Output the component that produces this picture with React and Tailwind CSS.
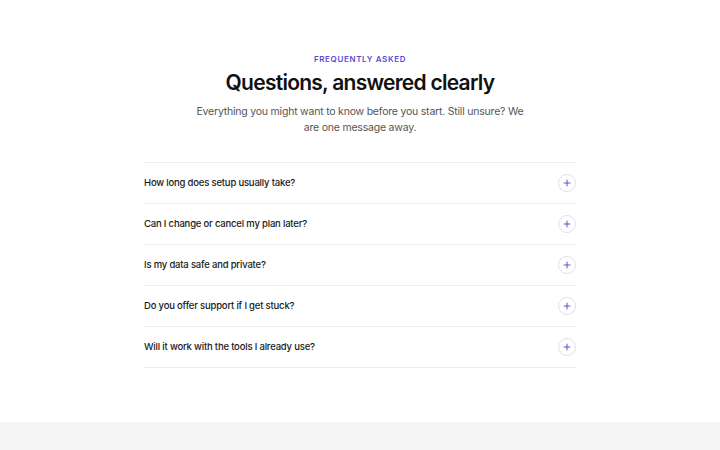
import React from 'react';
import { Plus } from 'lucide-react';

const faqs = [
  'How long does setup usually take?',
  'Can I change or cancel my plan later?',
  'Is my data safe and private?',
  'Do you offer support if I get stuck?',
  'Will it work with the tools I already use?',
];

const FaqRow = ({ question }) => (
  <div className="flex h-[41px] items-center justify-between border-b border-[#ececec]">
    <span className="text-[9.5px] font-medium tracking-[-0.02em] text-[#1a1a1a]">{question}</span>
    <button className="flex h-[18px] w-[18px] items-center justify-center rounded-full border border-[#e2dff0] text-[#5f4dd4]">
      <Plus size={10} strokeWidth={2.4} />
    </button>
  </div>
);

export default function App() {
  return (
    <div className="min-h-[450px] bg-[#f5f5f5] font-['Inter',sans-serif]">
      <section className="bg-white pt-[53px] pb-[54px]">
        <div className="flex flex-col items-center text-center">
          <p className="text-[8px] font-semibold uppercase tracking-[0.08em] text-[#5b4bd3]">
            Frequently asked
          </p>
          <h2 className="mt-[4px] text-[21px] font-semibold leading-[28px] tracking-[-0.035em] text-[#111]">
            Questions, answered clearly
          </h2>
          <p className="mt-[7px] w-[330px] text-[10.5px] leading-[16px] tracking-[-0.02em] text-[#555]">
            Everything you might want to know before you start. Still unsure? We are one message away.
          </p>
        </div>
        <div className="mx-auto mt-[26px] w-[432px] border-t border-[#ececec]">
          {faqs.map((q) => (
            <FaqRow key={q} question={q} />
          ))}
        </div>
      </section>
    </div>
  );
}
